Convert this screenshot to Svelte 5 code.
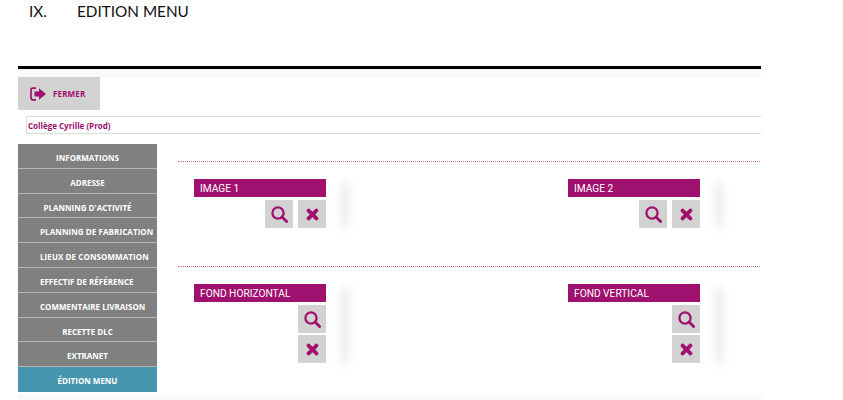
<script>
  const menu = [
    { label: "INFORMATIONS" },
    { label: "ADRESSE" },
    { label: "PLANNING D'ACTIVITÉ" },
    { label: "PLANNING DE FABRICATION", left: true, wide: true },
    { label: "LIEUX DE CONSOMMATION", left: true, wide: true },
    { label: "EFFECTIF DE RÉFÉRENCE", left: true },
    { label: "COMMENTAIRE LIVRAISON", left: true },
    { label: "RECETTE DLC" },
    { label: "EXTRANET" },
    { label: "ÉDITION MENU" },
  ];
  const sections = [
    { stacked: false, items: ["IMAGE 1", "IMAGE 2"] },
    { stacked: true, items: ["FOND HORIZONTAL", "FOND VERTICAL"] },
  ];
</script>

<div class="page">
  <h2 class="heading"><span class="num">IX.</span><span>EDITION MENU</span></h2>

  <div class="frame">
    <div class="topband"></div>
    <button class="close">
      <svg width="17" height="14" viewBox="0 0 17 14">
        <path d="M6 1.2H3Q1 1.2 1 3.2V10.8Q1 12.8 3 12.8H6" fill="none" stroke="#a0106e" stroke-width="1.7" />
        <path d="M4.5 4.6H9V1.2L16 7L9 12.8V9.4H4.5Z" fill="#a0106e" />
      </svg>
      FERMER
    </button>
    <div class="title">Collège Cyrille (Prod)</div>

    <div class="body">
      <nav class="menu">
        {#each menu as item, i}
          <div
            class="item"
            class:active={i === menu.length - 1}
            class:left={item.left}
            class:wide={item.wide}
          >{item.label}</div>
        {/each}
      </nav>

      <div class="content">
        {#each sections as section}
          <section class="section" class:stacked={section.stacked}>
            {#each section.items as label}
              <div class="field">
                <div class="slot">
                  <div class="label">{label}</div>
                  <div class="actions">
                    <button class="action" aria-label="Voir">
                      <svg width="17" height="17" viewBox="0 0 17 17">
                        <circle cx="7" cy="7" r="5.6" fill="none" stroke="#a0106e" stroke-width="2.3" />
                        <path d="M11 11L15.6 15.6" stroke="#a0106e" stroke-width="2.8" stroke-linecap="round" />
                      </svg>
                    </button>
                    <button class="action" aria-label="Supprimer">
                      <svg width="13" height="13" viewBox="0 0 13 13">
                        <path d="M2.6 2.6L10.4 10.4M10.4 2.6L2.6 10.4" stroke="#a0106e" stroke-width="3.8" stroke-linecap="round" />
                      </svg>
                    </button>
                  </div>
                </div>
                <div class="blur"></div>
              </div>
            {/each}
          </section>
        {/each}
      </div>
    </div>
    <div class="bottomband"></div>
  </div>
</div>

<style>
  :global(body) {
    margin: 0;
    background: #fff;
  }
  .page {
    width: 843px;
    height: 400px;
    overflow: hidden;
    font-family: "Open Sans", sans-serif;
  }
  .heading {
    display: flex;
    margin: 0;
    height: 66px;
    padding: 2px 0 0 29px;
    box-sizing: border-box;
    font-family: Lato, sans-serif;
    font-size: 15.3px;
    line-height: 18px;
    font-weight: 400;
    color: #111;
  }
  .num {
    width: 48px;
  }
  .frame {
    width: 743px;
    margin-left: 18px;
    border-top: 3px solid #000;
  }
  .topband {
    height: 8px;
    background: #f7f9fb;
  }
  button {
    border: none;
    font: inherit;
    padding: 0;
  }
  .close {
    display: flex;
    align-items: center;
    gap: 6px;
    width: 82px;
    height: 33px;
    padding-left: 12px;
    box-sizing: border-box;
    background: #d2d2d2;
    color: #a0106e;
    font-size: 8px;
    letter-spacing: 0.15px;
    font-weight: 700;
  }
  .title {
    margin: 6px 0 10px 8px;
    height: 18px;
    box-sizing: border-box;
    border: 1px solid #dcdcdc;
    border-right: none;
    padding-left: 1px;
    font-size: 8px;
    line-height: 17px;
    font-weight: 700;
    color: #9a1070;
  }
  .body {
    display: flex;
    height: 249px;
  }
  .menu {
    display: flex;
    flex-direction: column;
    width: 139px;
    flex: none;
  }
  .item {
    height: 24.8px;
    box-sizing: border-box;
    border-bottom: 1px solid #b4b4b4;
    background: #808080;
    color: #fff;
    font-size: 8px;
    font-weight: 700;
    line-height: 27px;
    text-align: center;
    white-space: nowrap;
  }
  .item.left {
    padding-left: 22px;
    text-align: left;
  }
  .item.wide {
    letter-spacing: 0.08px;
  }
  .item.active {
    border-bottom: none;
    background: #4795ae;
  }
  .content {
    flex: 1;
    padding: 17px 1px 0 21px;
  }
  .section {
    display: grid;
    grid-template-columns: 374px 1fr;
    height: 105px;
    box-sizing: border-box;
    border-top: 1px dotted #d070b0;
    padding: 17px 0 0 16px;
  }
  .field {
    display: flex;
    gap: 15px;
    align-items: flex-start;
  }
  .slot {
    width: 132px;
  }
  .label {
    height: 18px;
    background: #a0106e;
    color: #fff;
    font-family: Roboto, sans-serif;
    font-size: 10.2px;
    line-height: 19px;
    padding-left: 6px;
  }
  .actions {
    display: flex;
    justify-content: flex-end;
    gap: 5px;
    margin-top: 3px;
  }
  .stacked .actions {
    flex-direction: column;
    align-items: flex-end;
    gap: 2px;
    margin-top: 3px;
  }
  .action {
    display: flex;
    align-items: center;
    justify-content: center;
    width: 28px;
    height: 28px;
    border-radius: 1px;
    background: #d2d2d2;
  }
  .blur {
    width: 8px;
    height: 46px;
    margin-top: 3px;
    background: #ececec;
    filter: blur(4px);
  }
  .stacked .blur {
    height: 76px;
  }
  .bottomband {
    height: 8px;
    margin-top: 1px;
    background: #f7f9fb;
  }
</style>
